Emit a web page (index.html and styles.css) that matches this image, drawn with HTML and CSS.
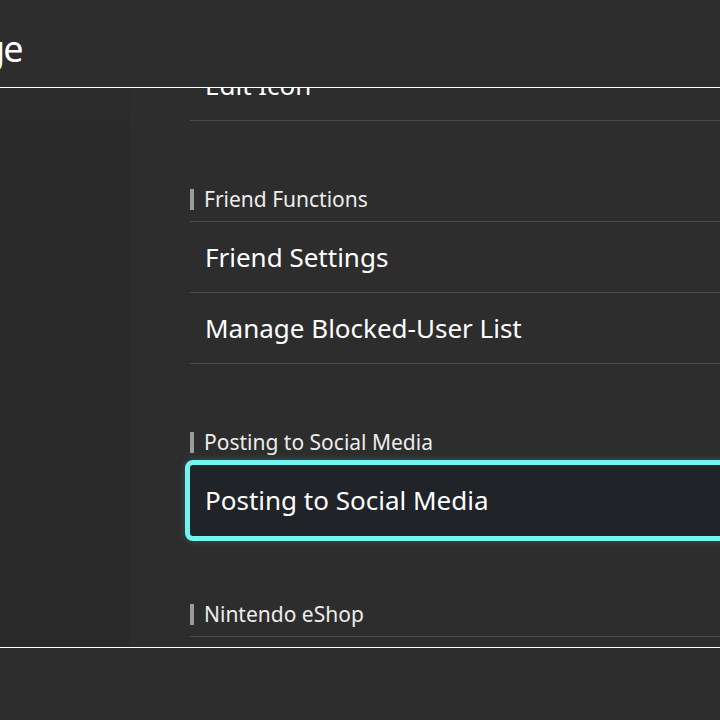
FILE: index.html
```html
<!DOCTYPE html>
<html lang="en">
<head>
    <meta charset="UTF-8">
    <meta name="viewport" content="width=device-width, initial-scale=1.0">
    <title>User Page</title>
    <link rel="stylesheet" href="styles.css">
</head>
<body>

    <header class="top-bar">
        <span class="page-title">ge</span>
    </header>

    <main class="main-area">
        <aside class="side-panel"></aside>

        <section class="settings-list">
            <div class="item">Edit Icon</div>

            <div class="group-title"><span class="group-label">Friend Functions</span></div>
            <div class="item">Friend Settings</div>
            <div class="item">Manage Blocked-User List</div>

            <div class="group-title"><span class="group-label">Posting to Social Media</span></div>
            <div class="item selected">Posting to Social Media</div>

            <div class="group-title"><span class="group-label">Nintendo eShop</span></div>
        </section>
    </main>

    <footer class="bottom-bar"></footer>

</body>
</html>
```

FILE: styles.css
```css
body {
    font-family: "Noto Sans", "DejaVu Sans", sans-serif;
    background-color: #2d2d2d;
    color: #fff;
    margin: 0;
    width: 720px;
    height: 720px;
    overflow: hidden;
}
.top-bar {
    height: 87px;
    border-bottom: 1px solid #fff;
    overflow: hidden;
}
.page-title {
    display: block;
    font-size: 36px;
    line-height: 50px;
    margin-top: 24px;
    margin-left: -17px;
    letter-spacing: -2px;
    white-space: nowrap;
}
.main-area {
    display: flex;
    height: 559px;
    overflow: hidden;
}
.side-panel {
    width: 130px;
    flex-shrink: 0;
    background: linear-gradient(#2c2c2c, #2a2a2a 40px);
}
.settings-list {
    margin-top: -38px;
    margin-left: 60px;
    margin-right: -40px;
    flex: 1;
}
.item {
    height: 70px;
    line-height: 70px;
    padding-left: 15px;
    font-size: 26px;
    border-bottom: 1px solid #4b4b4b;
    white-space: nowrap;
}
.item.selected {
    background-color: #202327;
    border-bottom-color: #202327;
    border-radius: 3px;
    outline: 5px solid #74f4ef;
    box-shadow: 0 0 8px 4px rgba(116, 244, 239, 0.25);
}
.group-title {
    padding-top: 66px;
    padding-bottom: 10px;
    border-bottom: 1px solid #4b4b4b;
}
.group-label {
    display: flex;
    align-items: center;
    height: 24px;
    font-size: 21px;
    color: #ececec;
}
.group-label::before {
    content: "";
    width: 4px;
    height: 21px;
    margin-right: 10px;
    background-color: #9b9b9b;
}
.bottom-bar {
    height: 72px;
    border-top: 1px solid #fff;
}
```
